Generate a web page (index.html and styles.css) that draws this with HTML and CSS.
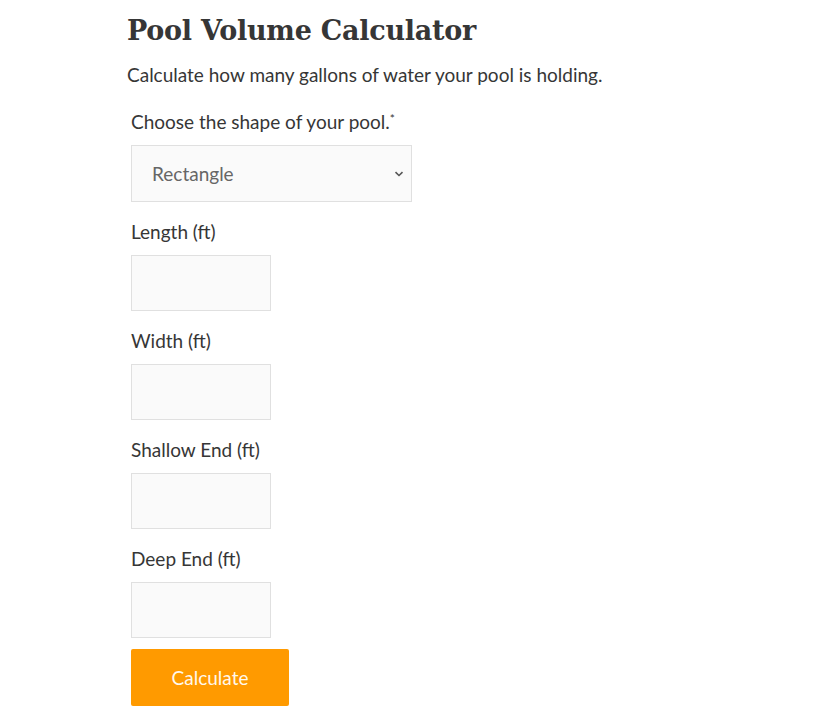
FILE: index.html
```html
<!doctype html>
<html>
    <head>
        <meta charset="utf-8">
        <meta name="viewport" content="width=device-width,initial-scale=1">
        <title>Pool Volume Calculator</title>
        <link rel="stylesheet" href="styles.css">
    </head>
    <body>
        <section class="main">
            <h1 class="title">Pool Volume Calculator</h1>
            <p class="intro">Calculate how many gallons of water your pool is holding.</p>
            <form class="calc-form" onsubmit="return false;">
                <div class="field">
                    <label for="shape">Choose the shape of your pool.<span class="req">*</span></label>
                    <div class="select-wrap">
                        <select id="shape">
                            <option value="rectangle">Rectangle</option>
                            <option value="round">Round</option>
                            <option value="oval">Oval</option>
                        </select>
                        <svg class="chevron" width="10" height="6" viewBox="0 0 10 6"><path d="M1.5 1.2 L5 4.5 L8.5 1.2" fill="none" stroke="#555" stroke-width="1.6"/></svg>
                    </div>
                </div>
                <div class="field">
                    <label for="length">Length (ft)</label>
                    <input type="text" id="length">
                </div>
                <div class="field">
                    <label for="width">Width (ft)</label>
                    <input type="text" id="width">
                </div>
                <div class="field">
                    <label for="shallow">Shallow End (ft)</label>
                    <input type="text" id="shallow">
                </div>
                <div class="field">
                    <label for="deep">Deep End (ft)</label>
                    <input type="text" id="deep">
                </div>
                <button class="calc-btn" type="submit">Calculate</button>
            </form>
        </section>
    </body>
</html>
```

FILE: styles.css
```css
body {
    margin: 0;
    background: #fff;
    color: #363636;
    font-family: Lato, "Noto Sans", sans-serif;
    font-size: 19px;
}
.main {
    padding: 8px 0 0 127px;
}
.title {
    margin: 0;
    font-family: "DejaVu Serif", serif;
    font-size: 27px;
    font-weight: bold;
    line-height: 46px;
    color: #363636;
    letter-spacing: -0.25px;
}
.intro {
    margin: 8px 0 0 0;
    line-height: 26px;
}
.calc-form {
    padding-left: 4px;
    margin-top: 20px;
}
.field {
    margin-bottom: 16px;
}
.field label {
    display: block;
    line-height: 27px;
    margin-bottom: 10px;
}
.req {
    font-size: 12px;
    vertical-align: top;
    position: relative;
    top: -3px;
}
.select-wrap {
    position: relative;
    width: 281px;
}
.select-wrap select {
    width: 281px;
    height: 57px;
    padding: 0 20px;
    font-family: inherit;
    font-size: 19px;
    color: #666;
    background: #fafafa;
    border: 1px solid #e0e0e0;
    border-radius: 0;
    -webkit-appearance: none;
    appearance: none;
}
.chevron {
    position: absolute;
    right: 8px;
    top: 26px;
}
.field input {
    width: 140px;
    height: 56px;
    box-sizing: border-box;
    background: #fafafa;
    border: 1px solid #e0e0e0;
    border-radius: 0;
    padding: 0 10px;
    font-size: 19px;
}
.calc-btn {
    margin-top: -5px;
    width: 158px;
    height: 57px;
    background: #ff9a00;
    color: #fff8ec;
    border: none;
    border-radius: 2px;
    font-family: inherit;
    font-size: 19px;
    cursor: pointer;
}
```
